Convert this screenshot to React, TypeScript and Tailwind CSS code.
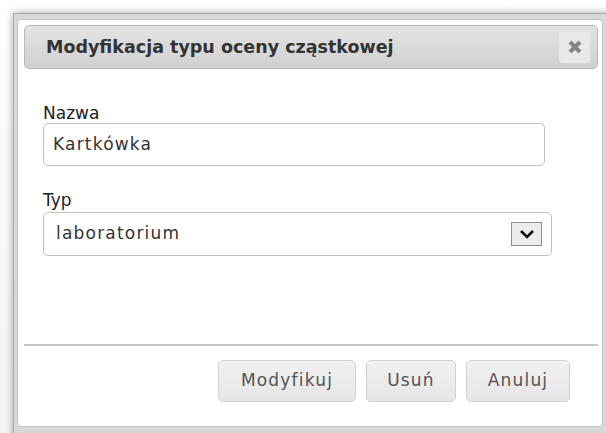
const font = { fontFamily: '"DejaVu Sans", Verdana, sans-serif' };

function CloseIcon() {
  return (
    <svg width="16" height="16" viewBox="0 0 16 16">
      <path d="M3 3 L13 13 M13 3 L3 13" stroke="#858585" strokeWidth="4" />
    </svg>
  );
}

function Chevron() {
  return (
    <svg width="16" height="10" viewBox="0 0 16 10">
      <path d="M2 2 L8 8 L14 2" fill="none" stroke="#111" strokeWidth="2.6" />
    </svg>
  );
}

function Button({ label, width }: { label: string; width: string }) {
  return (
    <button
      className={`${width} h-[42px] rounded-[5px] border border-[#d2d2d2] bg-gradient-to-b from-[#f1f1f1] to-[#e6e6e6] text-[17px] tracking-[1.2px] text-[#555]`}
    >
      {label}
    </button>
  );
}

export default function App() {
  return (
    <div
      className="w-[606px] h-[433px] overflow-hidden bg-gradient-to-b from-white to-[#f4f4f4] pl-[13px] pt-[13px]"
      style={font}
    >
      <div className="w-[600px] h-[430px] bg-[#d8d8d8] border-l border-t border-[#a9a9a9] pl-[3px] pt-[5px] shadow-[0_0_8px_rgba(0,0,0,0.35)]">
        <div className="w-[586px] h-[408px] flex flex-col rounded-[4px] border border-[#c4c4c4] bg-white">
          {/* title bar */}
          <div className="mt-[5px] ml-[6px] mr-[4px] h-[44px] flex items-center justify-between rounded-[5px] border border-[#b9b9b9] bg-gradient-to-b from-[#e3e3e3] to-[#d0d0d0] pl-[21px] pr-[7px]">
            <span className="text-[17.5px] font-bold text-[#333]">Modyfikacja typu oceny cząstkowej</span>
            <div className="w-[31px] h-[31px] flex items-center justify-center rounded-[4px] bg-[#e8e8e8]">
              <CloseIcon />
            </div>
          </div>

          <div className="flex flex-col pl-[25px]">
            <label className="mt-[34px] text-[17px] leading-[20px] text-[#222]">Nazwa</label>
            <div className="w-[502px] h-[43px] flex items-center rounded-[5px] border border-[#c2c2c2] px-[9px] text-[17px] tracking-[1.2px] text-[#333]">
              Kartkówka
            </div>

            <label className="mt-[24px] mb-[2px] text-[17px] leading-[20px] text-[#222]">Typ</label>
            <div className="w-[509px] h-[44px] flex items-center justify-between rounded-[5px] border border-[#c2c2c2] pl-[12px] pr-[9px] text-[17px] tracking-[1.2px] text-[#333]">
              <span>laboratorium</span>
              <div className="w-[31px] h-[24px] flex items-center justify-center border border-[#8e8e8e] bg-[#ececec]">
                <Chevron />
              </div>
            </div>
          </div>

          <div className="mt-[88px] ml-[6px] mr-[4px] h-[2px] bg-[#c6c6c6]" />

          <div className="mt-[14px] mr-[32px] flex justify-end gap-[10px]">
            <Button label="Modyfikuj" width="w-[138px]" />
            <Button label="Usuń" width="w-[90px]" />
            <Button label="Anuluj" width="w-[104px]" />
          </div>
        </div>
      </div>
    </div>
  );
}
